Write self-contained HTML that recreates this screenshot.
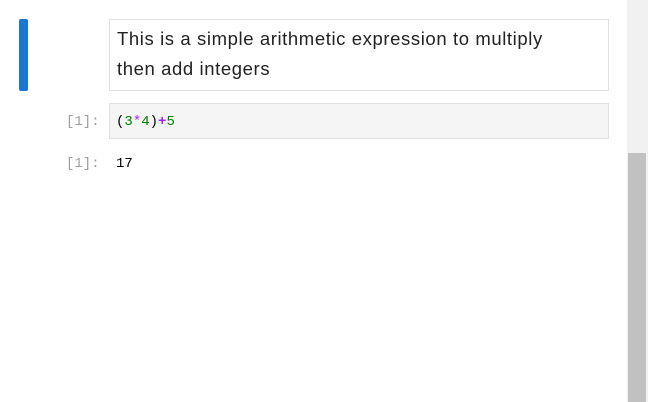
<!DOCTYPE html>
<html><head><style>
body{margin:0;width:648px;height:402px;background:#fff;position:relative;overflow:hidden;font-family:"Liberation Sans",sans-serif}
.bar{position:absolute;left:19px;top:19px;width:9px;height:72px;background:#1976d2;border-radius:2px}
.md{position:absolute;left:109px;top:19px;width:498px;height:70px;border:1px solid #e0e0e0;box-sizing:content-box}
.md p{margin:0;padding:4px 7px;font-size:18.5px;letter-spacing:0.6px;line-height:30px;color:#222;white-space:nowrap}
.code{position:absolute;left:109px;top:103px;width:498px;height:34px;background:#f5f5f5;border:1px solid #e0e0e0}
.mono{font-family:"Liberation Mono",monospace;font-size:14px}
.pr{position:absolute;left:66px;color:#9e9e9e}
.ct{position:absolute;left:6px;top:10px;color:#000}
.g{color:#008000}.p{color:#aa22ff}
.track{position:absolute;left:627px;top:0;width:21px;height:402px;background:#f1f1f1}
.thumb{position:absolute;left:628px;top:153px;width:18px;height:249px;background:#c1c1c1}
</style></head><body>
<div class="bar"></div>
<div class="md"><p>This is a simple arithmetic expression to multiply<br>then add integers</p></div>
<div class="mono pr" style="top:114px">[1]:</div>
<div class="code mono"><span class="ct">(<span class="g">3</span><span class="p">*</span><span class="g">4</span>)<span class="p"><b>+</b></span><span class="g">5</span></span></div>
<div class="mono pr" style="top:156px">[1]:</div>
<div class="mono" style="position:absolute;left:116px;top:156px;color:#000">17</div>
<div class="track"></div><div class="thumb"></div>
</body></html>
